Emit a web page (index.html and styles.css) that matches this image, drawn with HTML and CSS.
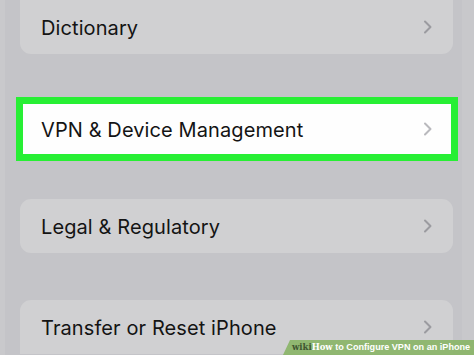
FILE: index.html
```html
<!DOCTYPE html>
<html lang="en">
<head>
<meta charset="utf-8">
<title>Settings</title>
<link rel="stylesheet" href="styles.css">
</head>
<body>
<main class="list">
  <div class="row row-first">
    <span class="label">Dictionary</span>
    <svg class="chev" width="10" height="14" viewBox="0 0 10 14"><path d="M2 1.5 L7.5 7 L2 12.5" fill="none" stroke="currentColor" stroke-width="2" stroke-linecap="round" stroke-linejoin="round"/></svg>
  </div>
  <div class="row row-highlight">
    <span class="label">VPN &amp; Device Management</span>
    <svg class="chev" width="10" height="14" viewBox="0 0 10 14"><path d="M2 1.5 L7.5 7 L2 12.5" fill="none" stroke="currentColor" stroke-width="2" stroke-linecap="round" stroke-linejoin="round"/></svg>
  </div>
  <div class="row row-legal">
    <span class="label">Legal &amp; Regulatory</span>
    <svg class="chev" width="10" height="14" viewBox="0 0 10 14"><path d="M2 1.5 L7.5 7 L2 12.5" fill="none" stroke="currentColor" stroke-width="2" stroke-linecap="round" stroke-linejoin="round"/></svg>
  </div>
  <div class="row row-last">
    <span class="label">Transfer or Reset iPhone</span>
    <svg class="chev" width="10" height="14" viewBox="0 0 10 14"><path d="M2 1.5 L7.5 7 L2 12.5" fill="none" stroke="currentColor" stroke-width="2" stroke-linecap="round" stroke-linejoin="round"/></svg>
  </div>
</main>
<div class="watermark"><span class="wm-wiki">wiki</span><span class="wm-how">How</span><span class="wm-text"> to Configure VPN on an iPhone</span></div>
</body>
</html>
```
FILE: styles.css
```css
html, body {
  margin: 0;
  padding: 0;
}
body {
  width: 474px;
  height: 355px;
  overflow: hidden;
  position: relative;
  background: linear-gradient(to right, #c9c9cc 0, #c9c9cc 5px, #c4c4c8 5px, #c4c4c8 462px, #c8c8cb 462px);
  font-family: Inter, "Noto Sans", "Liberation Sans", sans-serif;
}
.list {
  display: flex;
  flex-direction: column;
}
.row {
  box-sizing: border-box;
  height: 54px;
  margin: 0 21px 0 20px;
  padding: 0 20px 0 21px;
  display: flex;
  align-items: center;
  justify-content: space-between;
  background: #d0d0d2;
  border-radius: 11px;
  color: #141414;
}
.label {
  font-size: 20px;
  letter-spacing: 0.1px;
  padding-top: 1px;
}
.chev {
  color: #9b9ba0;
  display: block;
}
.row-first {
  border-radius: 0 0 11px 11px;
}
.row-highlight {
  margin: 43px 16px 0 16px;
  height: 64px;
  border: 7px solid #27ef34;
  border-radius: 0;
  background: #fefefe;
  padding: 0 18px 0 18px;
}
.row-highlight .chev {
  color: #b9b9bd;
}
.row-legal {
  margin-top: 38px;
}
.row-last {
  margin-top: 47px;
  border-radius: 11px 11px 0 0;
}
.watermark {
  position: absolute;
  right: 0;
  bottom: 0;
  width: 191px;
  height: 15px;
  background: rgba(138, 180, 104, 0.92);
  clip-path: polygon(7px 0, 100% 0, 100% 100%, 0 100%);
  box-sizing: border-box;
  padding-left: 9px;
  font-size: 8px;
  line-height: 15px;
  white-space: nowrap;
  color: #fff;
  font-weight: bold;
  overflow: hidden;
}
.wm-wiki {
  font-family: "DejaVu Serif", "Liberation Serif", serif;
  color: #3f5530;
  font-size: 8.5px;
}
.wm-how {
  font-family: "DejaVu Serif", "Liberation Serif", serif;
  font-size: 8.5px;
}
.wm-text {
  font-family: "Liberation Sans", Arial, sans-serif;
  font-size: 9.1px;
}
```
